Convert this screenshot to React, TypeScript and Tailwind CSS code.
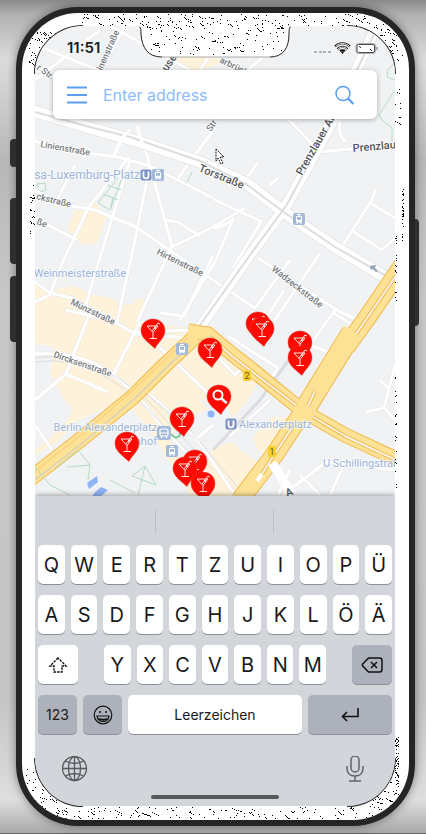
import type { ReactNode } from "react";

type Region = { x: number; y: number; w: number; h: number; n: number; seed: number };

function speckle(regions: Region[]): string {
  const parts: string[] = [];
  for (const r of regions) {
    let s = r.seed;
    const rnd = () => {
      s = (s * 16807) % 2147483647;
      return s / 2147483647;
    };
    for (let i = 0; i < r.n; i++) {
      let x = Math.floor(r.x + rnd() * r.w);
      let y = Math.floor(r.y + rnd() * r.h);
      const steps = rnd() > 0.7 ? 1 + Math.floor(rnd() * 5) : 1;
      for (let k = 0; k < steps; k++) {
        if (x < r.x + r.w && y < r.y + r.h) parts.push(`M${x} ${y}h1v1h-1z`);
        x += rnd() > 0.4 ? 1 : 2;
        y += rnd() > 0.3 ? 1 : 0;
      }
    }
  }
  return parts.join("");
}

const BEZEL = speckle([
  { x: 60, y: 14, w: 310, h: 12, n: 130, seed: 9151 },
  { x: 28, y: 26, w: 30, h: 40, n: 60, seed: 13799 },
  { x: 374, y: 22, w: 32, h: 42, n: 65, seed: 73361 },
  { x: 30, y: 185, w: 5, h: 60, n: 20, seed: 41187 },
  { x: 402, y: 185, w: 2, h: 58, n: 26, seed: 51749 },
  { x: 395, y: 85, w: 6, h: 50, n: 9, seed: 7129 },
  { x: 395, y: 230, w: 2, h: 72, n: 16, seed: 91943 },
  { x: 395, y: 370, w: 2, h: 130, n: 22, seed: 3761 },
  { x: 395, y: 735, w: 4, h: 50, n: 50, seed: 12907 },
  { x: 24, y: 768, w: 36, h: 50, n: 65, seed: 67733 },
  { x: 60, y: 807, w: 315, h: 12, n: 110, seed: 22391 },
  { x: 370, y: 780, w: 30, h: 36, n: 60, seed: 87121 },
]);

const NOTCH = speckle([
  { x: 146, y: 26, w: 30, h: 26, n: 26, seed: 5573 },
  { x: 176, y: 26, w: 50, h: 29, n: 34, seed: 8837 },
  { x: 226, y: 26, w: 58, h: 26, n: 36, seed: 14323 },
]);

function MapPin({ x, y, search }: { x: number; y: number; search?: boolean }) {
  return (
    <g transform={`translate(${x} ${y})`}>
      <path
        d="M0-12C7-12 12-7 12-.5C12 7 5 11 2 17.500C-5 11-12 7-12-.5C-12-7-7-12 0-12Z"
        fill="#fb0b02"
        stroke="#d9433b"
        strokeWidth=".5"
      />
      {search ? (
        <g stroke="#fff" fill="none" strokeLinecap="round">
          <circle cx="-1" cy="-2" r="4.500" strokeWidth="2" />
          <path d="M2.500 1.500L7 5.500" strokeWidth="2.500" />
        </g>
      ) : (
        <g stroke="#fff" fill="none" strokeWidth=".9">
          <path d="M-6-5H5L0 1.500Z M0 1.500V7 M-3.500 7.500H4 M-1 0L5-8L7-7" />
          <circle cx="2" cy="-3" r="1" fill="#fff" stroke="none" />
        </g>
      )}
    </g>
  );
}

function Tram({ x, y }: { x: number; y: number }) {
  return (
    <g transform={`translate(${x} ${y})`}>
      <rect x="-6" y="-6" width="12" height="12" rx="2" fill="#a3b9da" />
      <path d="M-2.500-2.500H2.500V3H-2.500Z M-2-4.500H2 M0-4.500V-2.500 M-2.500 5L-1 3 M2.500 5L1 3" stroke="#fff" strokeWidth="1" fill="none" />
      <path d="M-2 .8H2V3H-2Z" fill="#fff" />
    </g>
  );
}

function Train({ x, y }: { x: number; y: number }) {
  return (
    <g transform={`translate(${x} ${y})`}>
      <rect x="-7" y="-7" width="14" height="14" rx="3" fill="#a3b9da" />
      <rect x="-4" y="-4" width="8" height="7" rx="1.500" fill="none" stroke="#fff" strokeWidth="1.200" />
      <path d="M-4 0H4M-3 5L-2 3M3 5L2 3" stroke="#fff" strokeWidth="1.200" />
    </g>
  );
}

function Ubahn({ x, y }: { x: number; y: number }) {
  return (
    <g transform={`translate(${x} ${y})`}>
      <rect x="-5.500" y="-5.500" width="11" height="11" rx="2" fill="#7f92c8" />
      <path d="M-2.500-3.500V1C-2.500 4.200 2.500 4.200 2.500 1V-3.500" stroke="#fff" strokeWidth="1.800" fill="none" />
    </g>
  );
}

const minorRoads: string[] = [
  "M35 80L100 30 M35 45L98 70L170 110",
  "M110 26L190 70 M98 75L125 26 M75 165L57 200",
  "M35 141L62 150L118 157L150 166L213 198",
  "M129 157L88 208L60 268L50 295L35 302",
  "M130 160L90 290L84 312",
  "M150 165L135 240L117 322",
  "M145 148L172 246L137 322",
  "M35 190L65 205L95 210L136 227L213 280",
  "M35 218L77 240",
  "M172 247L213 227L245 208 M166 220L178 222L200 236",
  "M213 199L262 222 M178 178L215 128",
  "M213 228C230 225 236 215 232 222L215 262L180 320",
  "M247 178L258 162 M270 185L278 178",
  "M213 256L184 316L160 313 M233 268L262 220",
  "M258 258L340 312L364 322 M320 253L275 320",
  "M213 280L255 308L290 260 M284 290L262 325",
  "M343 245L370 203L395 218 M351 230L382 250L395 238 M370 203L376 190",
  "M35 282L50 293L72 298L120 325L135 334L190 338",
  "M135 332L190 330 M117 322L66 310",
  "M90 312L66 374L35 400 M140 322L113 375",
  "M35 354C85 350 110 370 137 395L165 430L213 480",
  "M66 374L108 392 M35 425L52 450",
  "M145 390L195 436L235 495 M195 440L213 425",
  "M157 345L213 398 M215 348L245 372",
  "M213 352L235 375L240 370 M228 336L278 368L270 380",
  "M270 400L230 436 M283 495L326 462L395 470",
  "M345 462L330 495 M300 475L320 495 M290 470L278 495",
  "M335 310L310 345L332 354 M332 312L354 326",
  "M395 365L384 408L366 412 M384 408L395 420 M380 380L390 390",
  "M286 117L320 152L350 149L395 144",
  "M336 112C345 120 333 132 346 142",
  "M200 70L213 50L220 35 M248 70L262 58",
];

const mapLabels: { t: string; x: number; y: number; r: number; s?: number; dark?: boolean }[] = [
  { t: "Linienstraße", x: 40, y: 147, r: 10 },
  { t: "Torstraße", x: 198, y: 171, r: 22, s: 11, dark: true },
  { t: "Prenzlauer Allee", x: 302, y: 176, r: -60, s: 11, dark: true },
  { t: "Prenzlau", x: 353, y: 152, r: -5, s: 11, dark: true },
  { t: "Hirtenstraße", x: 156, y: 254, r: 26 },
  { t: "Wadzeckstraße", x: 271, y: 270, r: 38 },
  { t: "Münzstraße", x: 70, y: 304, r: 26 },
  { t: "Dircksenstraße", x: 53, y: 357, r: 19 },
  { t: "ckstraße", x: 36, y: 199, r: 14 },
  { t: "ße", x: 36, y: 224, r: 20 },
  { t: "inenstraße", x: 102, y: 71, r: -66 },
  { t: "r Str.", x: 36, y: 69, r: 35 },
  { t: "use", x: 167, y: 72, r: -55, s: 11, dark: true },
  { t: "Str", x: 211, y: 132, r: -58 },
  { t: "arbrücker", x: 219, y: 62, r: 26 },
  { t: "A", x: 287, y: 497, r: -20, s: 11, dark: true },
];

const stationLabels: { t: string; x: number; y: number; s?: number; end?: boolean }[] = [
  { t: "sa-Luxemburg-Platz", x: 140, y: 179, s: 12, end: true },
  { t: "Weinmeisterstraße", x: 126, y: 277, end: true },
  { t: "Berlin Alexanderplatz", x: 157, y: 431, end: true },
  { t: "Bahnhof", x: 157, y: 445, end: true },
  { t: "Alexanderplatz", x: 239, y: 428 },
  { t: "U Schillingstraße", x: 323, y: 467 },
];

const pins: [number, number][] = [
  [153, 331],
  [210, 350],
  [258, 324],
  [262, 329],
  [300, 343],
  [300, 358],
  [182, 419],
  [127, 444],
  [195, 462],
  [185, 469],
  [203, 484],
];

function CityMap() {
  const tor = "M30 110L90 128L143 143L200 162L246 183L285 213L335 247L400 286";
  const allee = "M384 10L332 122L286 206L250 255L198 330";
  const yellowA = "M25 483L80 440L133 397L165 365L195 337";
  const yellowB = "M188 331L208 334L232 354L250 368L303 411L345 435L405 463";
  const yellowC = "M405 262L367 318L346 347";
  const yellowD = "M304 410L275 454L240 500";
  return (
    <svg className="absolute inset-0 h-full w-full" viewBox="35 26 360 470" preserveAspectRatio="xMidYMid slice" aria-label="Map of Berlin Mitte" role="img">
      <rect x="-200" y="-200" width="900" height="900" fill="#f0f2f4" />
      <g fill="#fef3da">
        <path d="M94 201L82 211L75 210L67 230L78 240L83 245L97 243L103 226L107 217Z" />
        <path d="M35 282L50 291L72 286L80 288L90 294L112 298L120 305L132 304L140 297L145 303L140 322L188 328L262 375L246 403L233 417L213 398L200 400L240 450L256 460L253 477L233 496H190L150 430L125 400L78 420L60 440L35 455V450L63 427L73 410L60 393L50 373L54 347L35 343Z" />
        <path d="M253 437L273 417H292L270 455L258 450Z M165 56L180 45L213 55L222 62L190 75Z" />
      </g>
      <path d="M175 425L225 400L240 440L213 447L200 480L170 450Z" fill="#f0f2f4" />
      <g fill="none" strokeLinejoin="round">
        {minorRoads.map((d) => (
          <path key={d} d={d} stroke="#e4e6e9" strokeWidth="4" />
        ))}
        {minorRoads.map((d) => (
          <path key={d} d={d} stroke="#fff" strokeWidth="3" />
        ))}
        <g stroke="#dadcdf" strokeWidth="1">
          <path d="M35 358C80 352 115 372 150 403L213 470M35 362C80 356 110 376 146 407L205 470M144 392L190 430L240 490" />
          <path d="M213 450L260 400L303 340" strokeWidth="3" />
        </g>
        <path d={tor} stroke="#e6e8ea" strokeWidth="13" />
        <path d={allee} stroke="#e6e8ea" strokeWidth="12" />
        <path d={tor} stroke="#fff" strokeWidth="11" />
        <path d={allee} stroke="#fff" strokeWidth="10" />
        <path d="M35 112L90 127L130 137L200 161L246 184L285 213L335 247L395 281M376 30L332 122L286 206L250 255L198 328" stroke="#dcdddf" strokeWidth="2" />
        <path d="M130 130C122 136 120 142 113 158M137 126L143 145" stroke="#fff" strokeWidth="3" />
        <g stroke="#f0b84a">
          <path d={yellowA} strokeWidth="16" />
          <path d={yellowB} strokeWidth="15" />
          <path d={yellowC} strokeWidth="19" />
          <path d={yellowD} strokeWidth="19" />
          <path d="M352 333L321 383L304 411" strokeWidth="22" />
        </g>
        <g stroke="#fde296">
          <path d={yellowA} strokeWidth="14" />
          <path d={yellowB} strokeWidth="13" />
          <path d={yellowC} strokeWidth="17" />
          <path d={yellowD} strokeWidth="17" />
          <path d="M353 331L321 383L302 414" strokeWidth="20" />
        </g>
        <g stroke="#efb94f" strokeWidth="4">
          <path d="M210 337L232 356L250 370L296 405M313 417L345 436L400 462M397 274L374 308L356 334M295 423L276 452L262 474M308 406L315 391" />
        </g>
        <g stroke="#f6f1e4" strokeWidth="2">
          <path d="M210 337L232 356L250 370L296 405M313 417L345 436L400 462M397 274L374 308L356 334M295 423L276 452L262 474M308 406L315 391" />
        </g>
        <path d="M35 480L85 441L133 400L190 345" stroke="#d9d0bb" strokeWidth="1.500" />
        <path d="M35 471L85 432L130 393L188 338" stroke="#f4cb6e" strokeWidth="1" />
        <path d="M272 463L292 494" stroke="#fff" strokeWidth="9" />
        <path d="M262 474L257 481" stroke="#fff" strokeWidth="4" />
      </g>
      <g fill="none" stroke="#b5dcc2" strokeWidth="1">
        <path d="M98 203L110 210L113 198M103 194L118 200M107 185L121 190M98 203L118 178M110 210L122 178M37 184L45 183L46 190L40 192M37 184L38 188" />
        <path d="M35 467L50 485L70 495M55 468L78 450L90 465L67 467M90 465L88 480M132 476L145 466L156 485L132 476M145 466L138 495M110 480L135 493" />
        <path d="M395 62L388 70L387 77L395 80M395 90L379 115L382 120L392 128V145M192 172L187 182" />
      </g>
      <g fill="#8fb4f5">
        <path d="M87 483L97 476L98 482L89 489ZM94 493L101 487L108 490L100 497H92Z" />
        <circle cx="211" cy="414" r="3.500" />
      </g>
      <g className="font-[Roboto,sans-serif]" stroke="#fff" strokeWidth="2" paintOrder="stroke" strokeLinejoin="round">
        {mapLabels.map((l) => (
          <text key={l.t + l.x} transform={`translate(${l.x} ${l.y}) rotate(${l.r})`} fontSize={l.s ?? 9} fontWeight="500" fill={l.dark ? "#505458" : "#74787c"}>
            {l.t}
          </text>
        ))}
        {stationLabels.map((l) => (
          <text key={l.t} x={l.x} y={l.y} fontSize={l.s ?? 11} textAnchor={l.end ? "end" : "start"} fill="#9bb5db" strokeOpacity=".6">
            {l.t}
          </text>
        ))}
      </g>
      <Ubahn x={146} y={175} />
      <Tram x={158} y={175} />
      <Tram x={299} y={219} />
      <Tram x={182} y={349} />
      <Train x={164} y={433} />
      <Tram x={172} y={451} />
      <Ubahn x={231} y={424} />
      <path d="M172 434A4 4 0 0 0 180 433" fill="none" stroke="#7cc796" strokeWidth="2" />
      <g className="font-[Roboto,sans-serif]" fontSize="9" textAnchor="middle" fill="#6b5a1c">
        <rect x="243" y="370" width="8" height="11" rx="1" fill="#f7d02f" />
        <text x="247" y="379">2</text>
        <rect x="268" y="446" width="8" height="11" rx="1" fill="#f7d02f" />
        <text x="272" y="455">1</text>
      </g>
      <path d="M370 266L376 265L375 268L378 271L376 272L373 269L371 270Z" fill="#92a5ba" />
      {pins.map(([x, y]) => (
        <MapPin key={`${x}-${y}`} x={x} y={y} />
      ))}
      <MapPin x={219} y={397} search />
      <path d="M216 149L224 157L220 157L223 163L221 164L218 158L216 161Z" fill="#fff" stroke="#111" strokeWidth="1" strokeDasharray="2 1" />
    </svg>
  );
}

function StatusBar() {
  return (
    <div className="relative flex h-11 items-center justify-between pr-[17px] pl-8">
      <time className="font-[Inter,sans-serif] text-[15px] font-semibold text-[#1c1c1c]">11:51</time>
      <svg className="h-[14px] w-[66px]" viewBox="312 41 66 14" aria-hidden="true">
        <path d="M314 52h3M319 52h3M323 52h3M328 52h3" stroke="#b0b2b5" strokeWidth="2" />
        <path d="M335 46.500C339 42 346 42 350 46.500M337.500 49C340 46 345 46 347.500 49M340 51.200C341 50 344 50 345 51.200" stroke="#111" strokeWidth="2" fill="none" />
        <path d="M335.500 46.500C339 42.500 346 42.500 349.500 46.500M338 49C340 46.500 345 46.500 347 49" stroke="#fff" strokeWidth=".9" fill="none" />
        <path d="M340.500 51.500h4L342.500 54Z" fill="#111" />
        <rect x="356" y="43.500" width="19.500" height="10" rx="2.500" fill="#fff" stroke="#a8adb5" />
        <rect x="357" y="44.500" width="17.500" height="8" rx="1.500" fill="#fff" stroke="#222" strokeWidth=".8" />
        <path d="M359 46l2 2M370 49l2 2" stroke="#333" strokeWidth="1" />
        <path d="M377 47v3" stroke="#8f9bab" strokeWidth="1.500" />
      </svg>
    </div>
  );
}

function Notch() {
  return (
    <svg className="pointer-events-none absolute top-0 left-1/2 h-8 w-[152px] -translate-x-1/2" viewBox="139 26 152 32" aria-hidden="true">
      <path d="M138 26C141 27 141 30 141 34C142 48 148 57 162 57H270C283 57 289 48 289 34C289 30 289 27 292 26Z" fill="#fff" />
      <path d="M139 26.500C141 28 141 30 141 34C142 48 148 57 162 57M270 57C283 57 289 48 289 34C289 30 289 28 291 26.500" fill="none" stroke="#222" strokeWidth="1" />
      <path d="M162 57H270" fill="none" stroke="#777" strokeWidth=".6" />
      <path d={NOTCH} fill="#000" shapeRendering="crispEdges" />
    </svg>
  );
}

function SearchBar() {
  return (
    <form className="relative mx-[18px] flex h-[49px] items-center rounded-md bg-white pr-[22px] pl-[14px] shadow-[0_1px_5px_rgba(0,0,0,0.3)]" onSubmit={(e) => e.preventDefault()}>
      <button type="button" aria-label="Menu" className="h-5 w-5 shrink-0">
        <svg viewBox="0 0 20 20" className="h-5 w-5">
          <path d="M0 2.500h20M0 10h20M0 17.500h20" stroke="#5b9ef3" strokeWidth="2" />
        </svg>
      </button>
      <input
        type="text"
        aria-label="Enter address"
        placeholder="Enter address"
        className="ml-4 min-w-0 flex-1 bg-transparent font-[Inter,sans-serif] text-base text-[#5b9ef3] outline-none placeholder:text-[#8cbcf6]"
      />
      <button type="submit" aria-label="Search" className="h-5 w-5 shrink-0">
        <svg viewBox="0 0 20 20" className="h-5 w-5" fill="none" stroke="#5b9ef3">
          <circle cx="8" cy="8.500" r="7" strokeWidth="1.500" />
          <path d="M13 13.500L18.500 19" strokeWidth="2.200" />
        </svg>
      </button>
    </form>
  );
}

const keyBase = "flex h-[39px] items-center justify-center rounded-[5px] shadow-[0_1px_0_#8d9096]";

function Key({ children, label, className }: { children: ReactNode; label?: string; className: string }) {
  return (
    <button type="button" aria-label={label} className={`${keyBase} ${className}`}>
      {children}
    </button>
  );
}

function LetterRow({ letters }: { letters: string }) {
  return (
    <div className="flex gap-[6px]">
      {letters.split("").map((c) => (
        <Key key={c} className="min-w-0 flex-1 bg-white text-xl">
          {c}
        </Key>
      ))}
    </div>
  );
}

function Keyboard() {
  return (
    <section aria-label="Keyboard" className="relative bg-[#d2d5da] px-[3px] font-[Inter,sans-serif] text-[#1a1a1a] shadow-[0_-1px_5px_rgba(0,0,0,0.35)]">
      <div className="grid h-[49px] grid-cols-3 items-center divide-x divide-[#bcbfc4]">
        <span className="h-6" />
        <span className="h-6" />
        <span className="h-6" />
      </div>
      <div className="flex flex-col gap-[11px]">
        <LetterRow letters="QWERTZUIOPÜ" />
        <LetterRow letters="ASDFGHJKLÖÄ" />
        <div className="grid grid-cols-[40px_1fr_40px] gap-[26px]">
          <Key label="Shift" className="bg-white">
            <svg viewBox="0 0 20 18" className="h-[18px] w-5" fill="none" stroke="#111" strokeWidth="1.400">
              <path d="M10 2L2 10H6V16H14V10H18Z" strokeDasharray="2.500 1" />
            </svg>
          </Key>
          <LetterRow letters="YXCVBNM" />
          <Key label="Delete" className="bg-[#acb1bb]">
            <svg viewBox="0 0 22 16" className="h-4 w-[22px]" fill="none" stroke="#111" strokeWidth="1.500">
              <path d="M7.500 1H18.500Q21 1 21 3.500V12.500Q21 15 18.500 15H7.500L1.500 8.800Q1 8 1.500 7.200Z" />
              <path d="M10 5L16 11M16 5L10 11" />
            </svg>
          </Key>
        </div>
        <div className="flex gap-[6px]">
          <Key className="w-[39px] bg-[#acb1bb] text-sm">123</Key>
          <Key label="Emoji" className="w-[39px] bg-[#acb1bb]">
            <svg viewBox="0 0 20 20" className="h-5 w-5" fill="none" stroke="#111" strokeWidth="1.200">
              <circle cx="10" cy="10" r="8.800" />
              <circle cx="7" cy="7" r="1" fill="#111" stroke="none" />
              <circle cx="13" cy="7" r="1" fill="#111" stroke="none" />
              <path d="M4 11H16C15.500 14.500 13 16.500 10 16.500S4.500 14.500 4 11Z" />
              <path d="M5 13Q10 14.500 15 13L13.500 15Q10 16.500 6.500 15Z" fill="#111" stroke="none" />
            </svg>
          </Key>
          <Key className="min-w-0 flex-1 bg-white text-sm">Leerzeichen</Key>
          <Key label="Return" className="w-[84px] bg-[#acb1bb]">
            <svg viewBox="0 0 18 16" className="h-4 w-[18px]" fill="none" stroke="#111" strokeWidth="1.600">
              <path d="M17 1V9.500H1.500M6 5L1.500 9.500L6 14" />
            </svg>
          </Key>
        </div>
      </div>
      <div className="flex h-[61px] items-end justify-between pr-7 pb-[13px] pl-6">
        <button type="button" aria-label="Next keyboard" className="h-[26px] w-[26px]">
          <svg viewBox="0 0 26 26" className="h-[26px] w-[26px]" fill="none" stroke="#55585c" strokeWidth="1.300">
            <circle cx="12.500" cy="12.500" r="12" />
            <ellipse cx="12.500" cy="12.500" rx="6" ry="12" />
            <path d="M12.500 .5V24.500M.5 12.500H24.500M3.500 5Q12.500 10 21.500 5M3.500 20Q12.500 15 21.500 20" />
          </svg>
        </button>
        <button type="button" aria-label="Dictate" className="h-[26px] w-[18px]">
          <svg viewBox="0 0 18 26" className="h-[26px] w-[18px]" fill="none" stroke="#606368" strokeWidth="1.500">
            <rect x="5" y="0" width="8" height="16" rx="4" />
            <path d="M1 10V12.500C1 17.500 4.500 20 9 20S17 17.500 17 12.500V10M9 20V25M3 25H15" />
          </svg>
        </button>
      </div>
      <div className="flex h-[11px] justify-center">
        <span className="h-1 w-32 rounded-full bg-[#56585b]" />
      </div>
    </section>
  );
}

export default function App() {
  return (
    <main className="border-b border-[#666] bg-[linear-gradient(180deg,#8a8a8a_0px,#b0b0b0_14px,#dcdcdc_60px,#b8b8b8_160px,#c8c8c8_300px,#c6c6c6_700px,#dedede_800px,#a8a8a8_833px)] pt-[7px] pr-[11px] pb-[7px] pl-4">
      <div className="relative rounded-[62px] border-[6px] border-[#242527] bg-[#242527] shadow-[0_0_10px_rgba(0,0,0,0.45),inset_0_0_0_1px_#000]">
        <span className="absolute top-[126px] -left-3 h-7 w-[6px] rounded-l-sm bg-[#2d2e30]" />
        <span className="absolute top-[185px] -left-3 h-[66px] w-[6px] rounded-l-sm bg-[#2d2e30]" />
        <span className="absolute top-[263px] -left-3 h-[66px] w-[6px] rounded-l-sm bg-[#2d2e30]" />
        <span className="absolute top-[206px] -right-[10px] h-[107px] w-1 rounded-r-sm bg-[#2d2e30]" />
        <div className="relative overflow-hidden rounded-[56px] bg-white pt-[13px] pr-[14px] pb-[14px] pl-[13px]">
          <svg className="pointer-events-none absolute inset-0 h-full w-full" viewBox="22 13 387 807" preserveAspectRatio="none" aria-hidden="true">
            <path d={BEZEL} fill="#000" shapeRendering="crispEdges" />
            <path
              d="M35 68V74A48 48 0 0 1 83 26M347 26A48 48 0 0 1 395 74M395 758A48 48 0 0 1 347 806M83 806A48 48 0 0 1 35 758"
              fill="none"
              stroke="#333"
              strokeWidth="2"
            />
          </svg>
          <div className="relative overflow-hidden rounded-[48px] bg-[#d2d5da]">
            <section aria-label="Map" className="relative h-[470px] overflow-hidden">
              <CityMap />
              <Notch />
              <StatusBar />
              <SearchBar />
            </section>
            <Keyboard />
          </div>
        </div>
      </div>
    </main>
  );
}
